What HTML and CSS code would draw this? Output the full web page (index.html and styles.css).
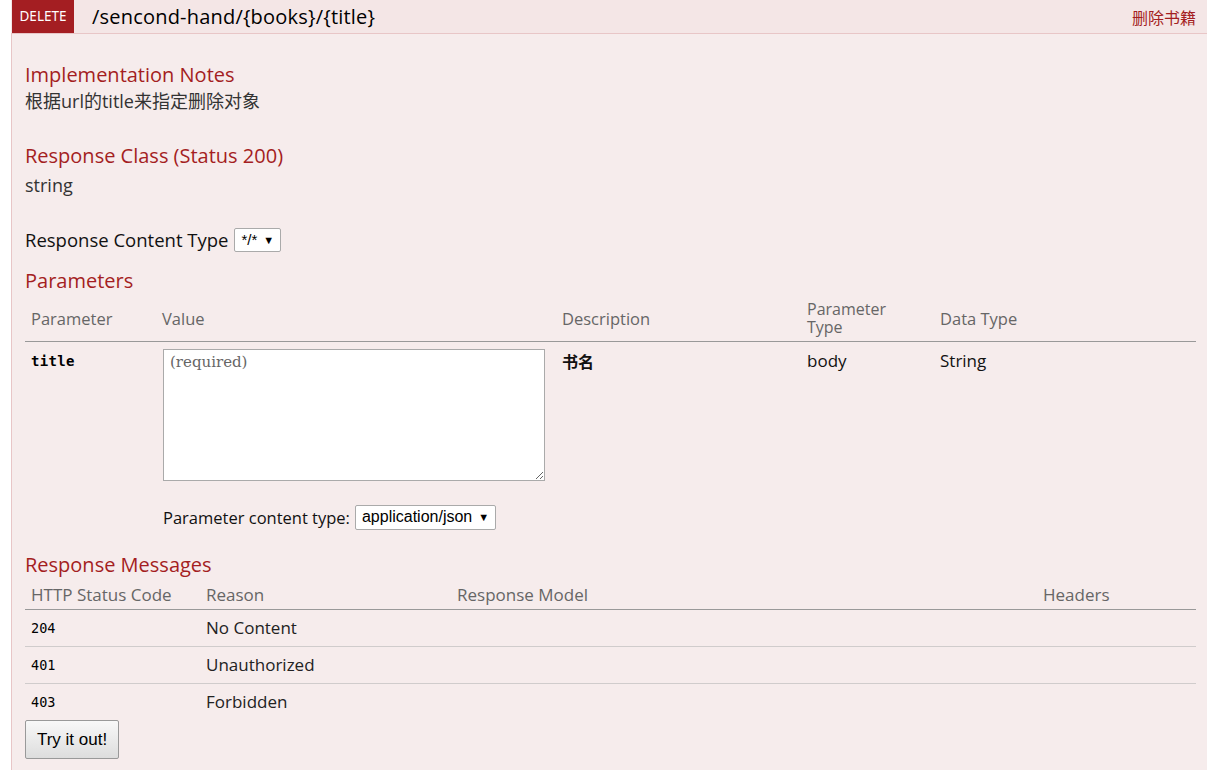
FILE: index.html
```html
<!DOCTYPE html>
<html>
<head>
<meta charset="utf-8">
<link rel="stylesheet" href="styles.css">
</head>
<body>
<div class="operation">
  <div class="heading">
    <span class="method">DELETE</span>
    <span class="path">/sencond-hand/{books}/{title}</span>
    <span class="summary">删除书籍</span>
  </div>
  <div class="content">
    <h4 class="sec first">Implementation Notes</h4>
    <p class="text">根据url的title来指定删除对象</p>
    <h4 class="sec sec-rc">Response Class (Status 200)</h4>
    <p class="text t2">string</p>
    <div class="rct">
      <span>Response Content Type</span>
      <span class="select small">*/* <i>▼</i></span>
    </div>
    <h4 class="sec sec-params">Parameters</h4>
    <table class="params">
      <colgroup>
        <col class="c1"><col class="c2"><col class="c3"><col class="c4"><col class="c5">
      </colgroup>
      <thead>
        <tr>
          <th>Parameter</th>
          <th>Value</th>
          <th>Description</th>
          <th class="ptype">Parameter<br>Type</th>
          <th>Data Type</th>
        </tr>
      </thead>
      <tbody>
        <tr>
          <td class="pname">title</td>
          <td class="valcell">
            <textarea class="body-area" placeholder="(required)"></textarea>
            <div class="pct">
              <span>Parameter content type:</span>
              <span class="select">application/json <i>▼</i></span>
            </div>
          </td>
          <td class="desc">书名</td>
          <td>body</td>
          <td>String</td>
        </tr>
      </tbody>
    </table>
    <h4 class="sec sec-resp">Response Messages</h4>
    <table class="resp">
      <colgroup>
        <col class="r1"><col class="r2"><col class="r3"><col class="r4">
      </colgroup>
      <thead>
        <tr>
          <th>HTTP Status Code</th>
          <th>Reason</th>
          <th>Response Model</th>
          <th>Headers</th>
        </tr>
      </thead>
      <tbody>
        <tr><td class="code">204</td><td>No Content</td><td></td><td></td></tr>
        <tr><td class="code">401</td><td>Unauthorized</td><td></td><td></td></tr>
        <tr><td class="code">403</td><td>Forbidden</td><td></td><td></td></tr>
      </tbody>
    </table>
    <button class="try">Try it out!</button>
  </div>
</div>
</body>
</html>
```
FILE: styles.css
```css
html, body {
  margin: 0;
  padding: 0;
  background: #ffffff;
}
body {
  font-family: "Open Sans", "Noto Sans CJK SC", sans-serif;
  color: #333;
  width: 1207px;
  height: 770px;
  overflow: hidden;
}
.operation {
  margin-left: 11px;
}
.heading {
  display: flex;
  align-items: center;
  height: 33px;
  background: #f4e6e6;
  border-bottom: 1px solid #e8c6c7;
}
.method {
  background: #a41e22;
  color: #fff;
  font-family: "Noto Sans", "Noto Sans CJK SC", sans-serif;
  font-size: 13.5px;
  width: 62px;
  height: 33px;
  line-height: 33px;
  text-align: center;
  margin-left: 1px;
}
.path {
  margin-left: 18px;
  font-size: 20px;
  color: #000;
  letter-spacing: 0.2px;
}
.summary {
  margin-left: auto;
  margin-right: 11px;
  color: #a41e22;
  font-family: "Noto Sans CJK SC", sans-serif;
  font-size: 16px;
}
.content {
  background: #f6ecec;
  border-left: 1px solid #e8c6c7;
  border-bottom: 1px solid #e8c6c7;
  border-bottom-left-radius: 6px;
  padding: 0 11px 10px 13px;
  height: 736px;
}
.sec {
  margin: 0;
  color: #a41e22;
  font-weight: normal;
  font-size: 20px;
  line-height: 26px;
}
.sec.first { padding-top: 28px; }
.sec-rc { margin-top: 29px; }
.sec-params { margin-top: 16px; }
.sec-resp { margin-top: 22px; }
.text {
  margin: 0;
  font-size: 18px;
  line-height: 26px;
  color: #333;
}
.text.t2 { margin-top: 3px; }
.rct {
  margin-top: 29px;
  display: flex;
  align-items: center;
  font-size: 18.5px;
  color: #111;
  gap: 6px;
}
.select {
  display: inline-flex;
  align-items: center;
  background: #fff;
  border: 1px solid #aaa;
  border-radius: 2px;
  font-family: "Liberation Sans", sans-serif;
  font-size: 16px;
  color: #000;
  height: 22px;
  padding: 0 6px 0 6px;
  gap: 6px;
}
.select.small { font-size: 15px; }
.select i {
  font-style: normal;
  font-size: 11px;
}
table {
  border-collapse: collapse;
  width: 1171px;
  table-layout: fixed;
}
.params { margin-top: 4px; }
.params .c1 { width: 131px; }
.params .c2 { width: 400px; }
.params .c3 { width: 245px; }
.params .c4 { width: 133px; }
.params .c5 { width: 262px; }
th {
  font-weight: normal;
  text-align: left;
  color: #666;
  font-size: 16.5px;
  padding: 0 6px;
  border-bottom: 1px solid #999;
  vertical-align: middle;
}
.params th { height: 43px; padding-bottom: 1px; box-sizing: border-box; }
.params th.ptype { line-height: 17.5px; font-size: 16px; }
td {
  vertical-align: top;
  font-size: 17px;
  color: #111;
  padding: 7px 6px 0 6px;
}
td.valcell { padding-left: 7px; }
td.pname {
  font-family: "DejaVu Sans Mono", monospace;
  font-weight: bold;
  font-size: 14px;
  letter-spacing: 0.3px;
  padding-top: 11px;
  color: #000;
}
td.desc {
  font-family: "Noto Sans CJK SC", sans-serif;
  font-weight: bold;
  font-size: 16px;
}
.body-area {
  display: block;
  box-sizing: border-box;
  width: 382px;
  height: 132px;
  margin: 0;
  border: 1px solid #aaa;
  background: #fff;
  padding: 3px 6px;
  font-family: "DejaVu Serif", serif;
  font-size: 15px;
  resize: both;
}
.body-area::placeholder { color: #666; }
.pct {
  display: flex;
  align-items: center;
  gap: 5px;
  margin-top: 24px;
  font-size: 16.5px;
  color: #111;
}
.pct .select { height: 23px; }
.resp { margin-top: 4px; }
.resp .r1 { width: 175px; }
.resp .r2 { width: 251px; }
.resp .r3 { width: 586px; }
.resp .r4 { width: 159px; }
.resp th { height: 27px; padding-top: 0; vertical-align: top; line-height: 25px; font-size: 17px; }
.resp td {
  height: 37px;
  box-sizing: border-box;
  padding: 0 6px;
  vertical-align: middle;
  border-bottom: 1px solid #d0cccc;
  color: #222;
}
.resp tr:last-child td { border-bottom: none; }
.resp td.code {
  font-family: "DejaVu Sans Mono", monospace;
  font-size: 13.5px;
  color: #000;
}
.try {
  display: block;
  margin-top: 0;
  width: 94px;
  height: 39px;
  border: 1px solid #999;
  border-radius: 2px;
  background: linear-gradient(#f8f8f8, #dddddd);
  font-family: "Liberation Sans", sans-serif;
  font-size: 17px;
  color: #000;
  padding: 0;
}
```
